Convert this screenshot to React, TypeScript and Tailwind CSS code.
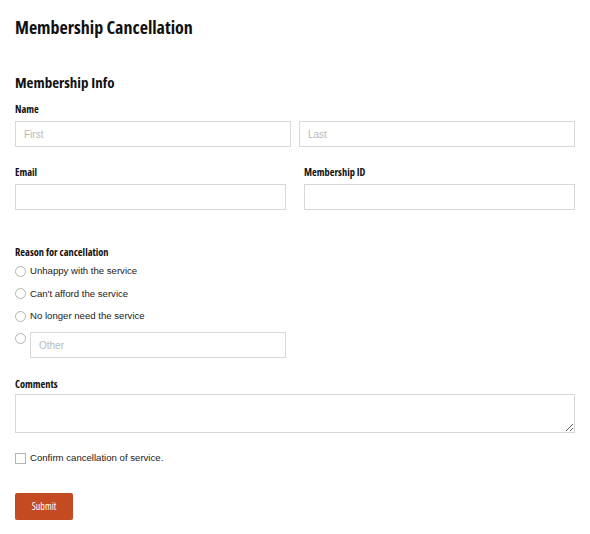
import React from 'react';

const heading = "font-['Open_Sans',sans-serif] font-bold [font-stretch:75%] text-[#111]";
const body = "font-['Liberation_Sans',Arial,sans-serif]";
const field =
  "block h-[26px] border border-[#d8d8d8] bg-white px-[8px] text-[10px] text-[#333] placeholder:text-[#b8b8b8] outline-none " + body;

const Label = ({ children }: { children: React.ReactNode }) => (
  <div className={`${heading} text-[10.4px] leading-[14px]`}>{children}</div>
);

const Radio = ({ label }: { label: string }) => (
  <label className="flex items-center gap-[4px] h-[14px]">
    <span className="w-[11px] h-[11px] rounded-full border border-[#b4b4b4] bg-white shrink-0" />
    <span className={`${body} text-[9.6px] text-[#1a1a1a]`}>{label}</span>
  </label>
);

export default function App() {
  return (
    <div className="w-[590px] h-[534px] bg-white px-[15px] pt-[14px]">
      <h1 className={`${heading} text-[18px] leading-[26px]`}>Membership Cancellation</h1>

      <h2 className={`${heading} text-[15px] leading-[22px] mt-[31px]`}>Membership Info</h2>

      <div className="mt-[9px]">
        <Label>Name</Label>
        <div className="flex gap-[8px] mt-[5px]">
          <input className={`${field} w-[276px]`} placeholder="First" />
          <input className={`${field} w-[276px]`} placeholder="Last" />
        </div>
      </div>

      <div className="flex gap-[18px] mt-[18px]">
        <div>
          <Label>Email</Label>
          <input className={`${field} w-[271px] mt-[5px]`} />
        </div>
        <div>
          <Label>Membership ID</Label>
          <input className={`${field} w-[271px] mt-[5px]`} />
        </div>
      </div>

      <div className="mt-[35px]">
        <Label>Reason for cancellation</Label>
        <div className="flex flex-col gap-[8.7px] mt-[5px]">
          <Radio label="Unhappy with the service" />
          <Radio label="Can't afford the service" />
          <Radio label="No longer need the service" />
          <div className="flex items-start gap-[4px]">
            <span className="w-[11px] h-[11px] mt-[1px] rounded-full border border-[#b4b4b4] bg-white shrink-0" />
            <input className={`${field} w-[256px]`} placeholder="Other" />
          </div>
        </div>
      </div>

      <div className="mt-[19px]">
        <Label>Comments</Label>
        <textarea className={`${field} w-[560px] h-[39px] mt-[3px] resize-y`} />
      </div>

      <label className="flex items-center gap-[4px] mt-[18px]">
        <span className="w-[11px] h-[11px] border border-[#b4b4b4] bg-white shrink-0" />
        <span className={`${body} text-[9.6px] text-[#1a1a1a]`}>Confirm cancellation of service.</span>
      </label>

      <button
        className={`${heading} font-normal text-[10px] text-white bg-[#c44a21] rounded-[2px] w-[58px] h-[27px] mt-[28px]`}
      >
        Submit
      </button>
    </div>
  );
}
